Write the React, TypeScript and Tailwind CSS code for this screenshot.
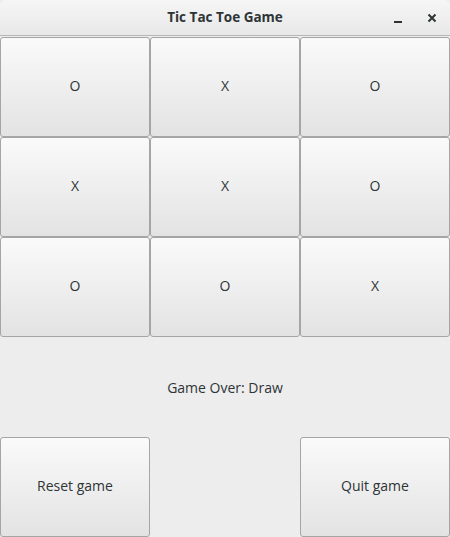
import React from 'react'

const board = ['O', 'X', 'O', 'X', 'X', 'O', 'O', 'O', 'X']

const btn =
  'flex items-center justify-center w-[150px] h-[100px] pb-[3px] border border-[#a5a5a5] rounded-[3px] bg-gradient-to-b from-[#fafafa] to-[#e3e3e3] text-[14px] text-[#2e3436]'

export default function App() {
  return (
    <div
      className="w-[450px] h-[537px] bg-[#ededed] flex flex-col overflow-hidden"
      style={{ fontFamily: '"Open Sans", "DejaVu Sans", sans-serif' }}
    >
      <div className="relative h-[36px] flex items-center justify-center rounded-t-[6px] bg-gradient-to-b from-[#f6f6f6] to-[#e8e8e8] border-b border-[#b6b6b6]">
        <span className="text-[13.5px] font-bold text-[#2e3436]">Tic Tac Toe Game</span>
        <div className="absolute right-[13px] top-0 h-full flex items-center gap-[24px] text-[#2e3436]">
          <svg width="10" height="10" viewBox="0 0 10 10">
            <rect x="1" y="8" width="8" height="2" fill="#2e3436" />
          </svg>
          <svg width="10" height="10" viewBox="0 0 10 10">
            <path d="M1.5 1.5 L8.5 8.5 M8.5 1.5 L1.5 8.5" stroke="#2e3436" strokeWidth="2" />
          </svg>
        </div>
      </div>
      <div className="mt-[1px] grid grid-cols-3">
        {board.map((v, i) => (
          <div key={i} className={btn}>
            {v}
          </div>
        ))}
      </div>
      <div className="h-[100px] flex items-center justify-center text-[14px] text-[#2e3436]">
        Game Over: Draw
      </div>
      <div className="flex justify-between">
        <div className={btn}>Reset game</div>
        <div className={btn}>Quit game</div>
      </div>
    </div>
  )
}
